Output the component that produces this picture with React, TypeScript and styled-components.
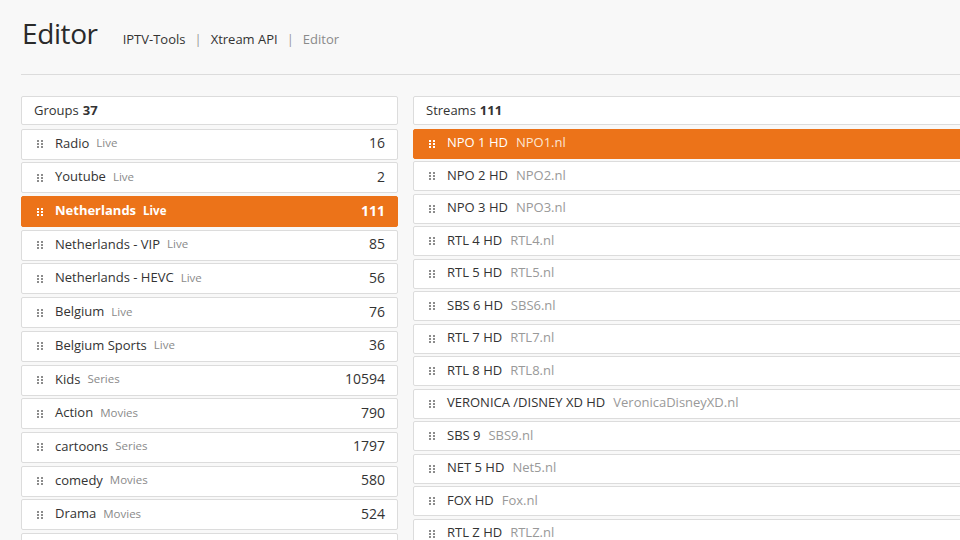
import * as React from "react";
import styled, { createGlobalStyle } from "styled-components";

const GlobalStyle = createGlobalStyle`
  html, body {
    margin: 0;
    padding: 0;
    background: #f8f8f8;
    overflow: hidden;
  }
  body {
    font-family: "Open Sans", "Liberation Sans", sans-serif;
    color: #333;
  }
`;

const Page = styled.div`
  width: 1240px;
  padding: 0 0 0 21px;
`;

const TitleBar = styled.div`
  display: flex;
  align-items: baseline;
  height: 75px;
  padding-left: 1px;
  box-sizing: border-box;
  padding-top: 14px;
  border-bottom: 1px solid #dcdcdc;
`;

const Title = styled.h1`
  margin: 0;
  font-size: 28px;
  font-weight: 400;
  color: #2a2a2a;
  letter-spacing: -0.4px;
`;

const Crumbs = styled.nav`
  margin-left: 25px;
  font-size: 13px;
  display: flex;
  gap: 9px;
`;

const Crumb = styled.span<{ $current?: boolean }>`
  color: ${(p) => (p.$current ? "#8a8a8a" : "#333")};
`;

const Sep = styled.span`
  color: #999;
`;

const Columns = styled.div`
  display: grid;
  grid-template-columns: 377px 1fr;
  gap: 15px;
  margin-top: 21px;
`;

const List = styled.div<{ $gap: number }>`
  display: flex;
  flex-direction: column;
  gap: ${(p) => p.$gap}px;
`;

const Head = styled.div`
  height: 29px;
  box-sizing: border-box;
  border: 1px solid #dcdcdc;
  border-radius: 2px;
  background: #fff;
  display: flex;
  align-items: center;
  padding: 0 0 2px 12px;
  font-size: 13px;
  margin-bottom: 1px;
  b {
    font-weight: 700;
    margin-left: 4px;
  }
`;

const Row = styled.div<{ $active?: boolean; $bold?: boolean; $h: number }>`
  height: ${(p) => p.$h}px;
  box-sizing: border-box;
  border: 1px solid ${(p) => (p.$active ? "#ec7319" : "#dcdcdc")};
  border-radius: 2px;
  background: ${(p) => (p.$active ? "#ec7319" : "#fff")};
  color: ${(p) => (p.$active ? "#fff" : "#333")};
  font-weight: ${(p) => (p.$bold ? 700 : 400)};
  display: flex;
  align-items: center;
  padding: 0 12px 3px 15px;
  font-size: 13px;
`;

const Handle = styled.span<{ $active?: boolean }>`
  display: grid;
  grid-template-columns: repeat(2, 2px);
  grid-auto-rows: 2px;
  gap: 1px 2px;
  margin: 3px 12px 0 0;
  span {
    background: ${(p) => (p.$active ? "#fff" : "#8c8c8c")};
  }
`;

const Name = styled.span``;

const Kind = styled.span<{ $active?: boolean; $small?: boolean }>`
  margin-left: ${(p) => (p.$small ? 7 : 8)}px;
  font-size: ${(p) => (p.$small ? 11.5 : 13)}px;
  color: ${(p) => (p.$active ? (p.$small ? "#fff" : "#fde6d3") : p.$small ? "#8a8a8a" : "#999")};
`;

const Count = styled.span`
  margin-left: auto;
  font-size: 14px;
`;

const DragHandle = ({ active }: { active?: boolean }) => (
  <Handle $active={active}>
    {Array.from({ length: 6 }).map((_, i) => (
      <span key={i} />
    ))}
  </Handle>
);

const groups = [
  { name: "Radio", kind: "Live", count: 16 },
  { name: "Youtube", kind: "Live", count: 2 },
  { name: "Netherlands", kind: "Live", count: 111, active: true },
  { name: "Netherlands - VIP", kind: "Live", count: 85 },
  { name: "Netherlands - HEVC", kind: "Live", count: 56 },
  { name: "Belgium", kind: "Live", count: 76 },
  { name: "Belgium Sports", kind: "Live", count: 36 },
  { name: "Kids", kind: "Series", count: 10594 },
  { name: "Action", kind: "Movies", count: 790 },
  { name: "cartoons", kind: "Series", count: 1797 },
  { name: "comedy", kind: "Movies", count: 580 },
  { name: "Drama", kind: "Movies", count: 524 },
  { name: "Documentary", kind: "Movies", count: 312 },
];

const streams = [
  { name: "NPO 1 HD", id: "NPO1.nl", active: true },
  { name: "NPO 2 HD", id: "NPO2.nl" },
  { name: "NPO 3 HD", id: "NPO3.nl" },
  { name: "RTL 4 HD", id: "RTL4.nl" },
  { name: "RTL 5 HD", id: "RTL5.nl" },
  { name: "SBS 6 HD", id: "SBS6.nl" },
  { name: "RTL 7 HD", id: "RTL7.nl" },
  { name: "RTL 8 HD", id: "RTL8.nl" },
  { name: "VERONICA /DISNEY XD HD", id: "VeronicaDisneyXD.nl" },
  { name: "SBS 9", id: "SBS9.nl" },
  { name: "NET 5 HD", id: "Net5.nl" },
  { name: "FOX HD", id: "Fox.nl" },
  { name: "RTL Z HD", id: "RTLZ.nl" },
  { name: "Comedy Central", id: "ComedyCentral.nl" },
];

export default function App() {
  return (
    <Page>
      <GlobalStyle />
      <TitleBar>
        <Title>Editor</Title>
        <Crumbs>
          <Crumb>IPTV-Tools</Crumb>
          <Sep>|</Sep>
          <Crumb>Xtream API</Crumb>
          <Sep>|</Sep>
          <Crumb $current>Editor</Crumb>
        </Crumbs>
      </TitleBar>
      <Columns>
        <List $gap={2.7}>
          <Head>
            Groups<b>37</b>
          </Head>
          {groups.map((g) => (
            <Row key={g.name} $active={g.active} $bold={g.active} $h={31}>
              <DragHandle active={g.active} />
              <Name>{g.name}</Name>
              <Kind $small $active={g.active}>
                {g.kind}
              </Kind>
              <Count>{g.count}</Count>
            </Row>
          ))}
        </List>
        <List $gap={2.5}>
          <Head>
            Streams<b>111</b>
          </Head>
          {streams.map((s) => (
            <Row key={s.id} $active={s.active} $h={30}>
              <DragHandle active={s.active} />
              <Name>{s.name}</Name>
              <Kind $active={s.active}>{s.id}</Kind>
            </Row>
          ))}
        </List>
      </Columns>
    </Page>
  );
}
